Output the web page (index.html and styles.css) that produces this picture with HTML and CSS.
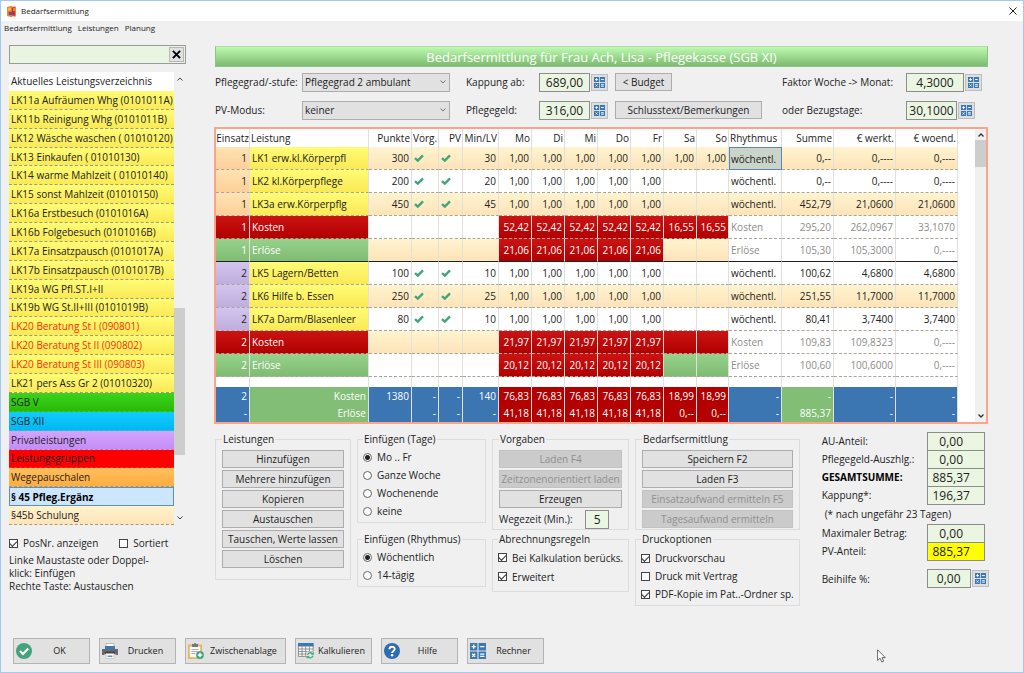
FILE: index.html
```html
<!DOCTYPE html>
<html lang="de">
<head>
<meta charset="utf-8">
<title>Bedarfsermittlung</title>
<link rel="stylesheet" href="styles.css">
</head>
<body>
<svg class="defs" aria-hidden="true">
  <symbol id="tick" viewBox="0 0 10 8"><path d="M1 4.2 3.8 6.6 9 1.4" fill="none" stroke="#3fa67c" stroke-width="2.4"/></symbol>
  <symbol id="calc" viewBox="0 0 16 16">
    <path fill="#3c78b4" d="M0 0h7.4v7.4H0zM8.6 0H16v7.4H8.6zM0 8.6h7.4V16H0zM8.6 8.6H16V16H8.6z"/>
    <path stroke="#fff" stroke-width="1.3" fill="none" d="M1.6 3.7h4.2M3.7 1.6v4.2M10.2 3.7h4.2M2.2 10.8l3 3M5.2 10.8l-3 3M10.2 11.2h4.2M10.2 13.4h4.2"/>
  </symbol>
</svg>
<div class="window">
  <header class="titlebar">
    <svg class="app-icon" viewBox="0 0 9 11"><path fill="#e8702a" d="M0 1 5 0v11l-5-1z"/><path fill="#b5305a" d="M5 1h4v9H5z"/><path fill="#f7b73c" d="M1 2l3-.4v3L1 5z"/><path fill="#f0803c" d="M6 2h2v3H6z"/><path fill="#6a4a9c" d="M2 6h3v3H2z"/><path fill="none" stroke="#f08a30" d="M.5 1.500 8.500.8v9.400l-8-.7z"/></svg>
    <h1>Bedarfsermittlung</h1>
    <button class="close" aria-label="Schließen"><svg viewBox="0 0 8 8"><path d="M.5.5l7 7M7.5.5l-7 7" stroke="#222" fill="none"/></svg></button>
  </header>
  <nav class="menu"><a href="#">Bedarfsermittlung</a><a href="#">Leistungen</a><a href="#">Planung</a></nav>

  <div class="content">
    <aside class="sidebar">
      <div class="search">
        <input type="text" aria-label="Suche">
        <button aria-label="Leeren"><svg viewBox="0 0 10 10"><path d="M1 1l8 8M9 1 1 9" stroke="#000" stroke-width="2.2" fill="none"/></svg></button>
      </div>
      <div class="list-wrap">
        <div class="list">
          <h2>Aktuelles Leistungsverzeichnis</h2>
          <ul>
            <li>LK11a Aufräumen Whg (0101011A)</li>
            <li>LK11b Reinigung Whg (0101011B)</li>
            <li>LK12 Wäsche waschen ( 01010120)</li>
            <li>LK13 Einkaufen ( 01010130)</li>
            <li>LK14 warme Mahlzeit ( 01010140)</li>
            <li>LK15 sonst Mahlzeit (01010150)</li>
            <li>LK16a Erstbesuch (0101016A)</li>
            <li>LK16b Folgebesuch (0101016B)</li>
            <li>LK17a Einsatzpausch (0101017A)</li>
            <li>LK17b Einsatzpausch (0101017B)</li>
            <li>LK19a WG Pfl.ST.I+II</li>
            <li>LK19b WG St.II+III (0101019B)</li>
            <li class="warn">LK20 Beratung St I (090801)</li>
            <li class="warn">LK20 Beratung St II (090802)</li>
            <li class="warn">LK20 Beratung St III (090803)</li>
            <li>LK21 pers Ass Gr 2 (01010320)</li>
            <li class="sgb5">SGB V</li>
            <li class="sgb12">SGB XII</li>
            <li class="privat">Privatleistungen</li>
            <li class="gruppen">Leistungsgruppen</li>
            <li class="wege">Wegepauschalen</li>
            <li class="selected">§ 45 Pfleg.Ergänz</li>
            <li class="cream">§45b Schulung</li>
          </ul>
        </div>
        <div class="scroll">
          <svg viewBox="0 0 6 4"><path d="M.5 3.5 3 1l2.5 2.5" fill="none" stroke="#444"/></svg>
          <div class="side-track"><i></i></div>
          <svg viewBox="0 0 6 4"><path d="M.5.5 3 3 5.500.5" fill="none" stroke="#444"/></svg>
        </div>
      </div>
      <div class="side-checks">
        <label><input type="checkbox" checked>PosNr. anzeigen</label>
        <label><input type="checkbox">Sortiert</label>
      </div>
      <p class="hint">Linke Maustaste oder Doppel-<br>klick: Einfügen<br>Rechte Taste: Austauschen</p>
    </aside>

    <main class="main">
      <h2 class="banner">Bedarfsermittlung für Frau Ach, Lisa - Pflegekasse (SGB XI)</h2>

      <div class="params">
        <label for="grad">Pflegegrad/-stufe:</label>
        <select id="grad"><option>Pflegegrad 2 ambulant</option></select>
        <label for="kapp">Kappung ab:</label>
        <div class="pair"><input id="kapp" class="num w-51" value="689,00"><button class="calc" aria-label="Rechner"><svg><use href="#calc"/></svg></button></div>
        <div><button class="btn budget">&lt; Budget</button></div>
        <label for="faktor">Faktor Woche -&gt; Monat:</label>
        <div class="pair"><input id="faktor" class="num w-58" value="4,3000"><button class="calc" aria-label="Rechner"><svg><use href="#calc"/></svg></button></div>

        <label for="modus">PV-Modus:</label>
        <select id="modus"><option>keiner</option></select>
        <label for="geld">Pflegegeld:</label>
        <div class="pair"><input id="geld" class="num w-51" value="316,00"><button class="calc" aria-label="Rechner"><svg><use href="#calc"/></svg></button></div>
        <div><button class="btn closing">Schlusstext/Bemerkungen</button></div>
        <label for="bezug">oder Bezugstage:</label>
        <div class="pair"><input id="bezug" class="num w-51" value="30,1000"><button class="calc" aria-label="Rechner"><svg><use href="#calc"/></svg></button></div>
      </div>

      <div class="grid">
        <table>
          <colgroup><col class="c34"><col class="c119"><col class="c43"><col class="c27"><col class="c24"><col class="c36"><col class="c33"><col class="c33"><col class="c33"><col class="c33"><col class="c33"><col class="c33"><col class="c32"><col class="c53"><col class="c52"><col class="c62"><col class="c62"></colgroup>
          <thead><tr><th>Einsatz</th><th>Leistung</th><th>Punkte</th><th>Vorg.</th><th>PV</th><th>Min/LV</th><th>Mo</th><th>Di</th><th>Mi</th><th>Do</th><th>Fr</th><th>Sa</th><th>So</th><th>Rhythmus</th><th>Summe</th><th>€ werkt.</th><th>€ woend.</th></tr></thead>
          <tbody>
            <tr class="shade"><td class="e1">1</td><td class="yel">LK1 erw.kl.Körperpfl</td><td>300</td><td><svg><use href="#tick"/></svg></td><td><svg><use href="#tick"/></svg></td><td>30</td><td>1,00</td><td>1,00</td><td>1,00</td><td>1,00</td><td>1,00</td><td>1,00</td><td>1,00</td><td class="focus">wöchentl.</td><td>0,--</td><td>0,----</td><td>0,----</td></tr>
            <tr><td class="e1">1</td><td class="yel">LK2 kl.Körperpflege</td><td>200</td><td><svg><use href="#tick"/></svg></td><td><svg><use href="#tick"/></svg></td><td>20</td><td>1,00</td><td>1,00</td><td>1,00</td><td>1,00</td><td>1,00</td><td></td><td></td><td>wöchentl.</td><td>0,--</td><td>0,----</td><td>0,----</td></tr>
            <tr class="shade"><td class="e1">1</td><td class="yel">LK3a erw.Körperpflg</td><td>450</td><td><svg><use href="#tick"/></svg></td><td><svg><use href="#tick"/></svg></td><td>45</td><td>1,00</td><td>1,00</td><td>1,00</td><td>1,00</td><td>1,00</td><td></td><td></td><td>wöchentl.</td><td>452,79</td><td>21,0600</td><td>21,0600</td></tr>
            <tr class="sum"><td class="red">1</td><td class="red">Kosten</td><td></td><td></td><td></td><td></td><td class="red">52,42</td><td class="red">52,42</td><td class="red">52,42</td><td class="red">52,42</td><td class="red">52,42</td><td class="red">16,55</td><td class="red">16,55</td><td>Kosten</td><td>295,20</td><td>262,0967</td><td>33,1070</td></tr>
            <tr class="sum shade last"><td class="grn">1</td><td class="grn">Erlöse</td><td></td><td></td><td></td><td></td><td class="red">21,06</td><td class="red">21,06</td><td class="red">21,06</td><td class="red">21,06</td><td class="red">21,06</td><td></td><td></td><td>Erlöse</td><td>105,30</td><td>105,3000</td><td>0,----</td></tr>
            <tr><td class="e2">2</td><td class="yel">LK5 Lagern/Betten</td><td>100</td><td><svg><use href="#tick"/></svg></td><td><svg><use href="#tick"/></svg></td><td>10</td><td>1,00</td><td>1,00</td><td>1,00</td><td>1,00</td><td>1,00</td><td></td><td></td><td>wöchentl.</td><td>100,62</td><td>4,6800</td><td>4,6800</td></tr>
            <tr class="shade"><td class="e2">2</td><td class="yel">LK6 Hilfe b. Essen</td><td>250</td><td><svg><use href="#tick"/></svg></td><td><svg><use href="#tick"/></svg></td><td>25</td><td>1,00</td><td>1,00</td><td>1,00</td><td>1,00</td><td>1,00</td><td></td><td></td><td>wöchentl.</td><td>251,55</td><td>11,7000</td><td>11,7000</td></tr>
            <tr><td class="e2">2</td><td class="yel">LK7a Darm/Blasenleer</td><td>80</td><td><svg><use href="#tick"/></svg></td><td><svg><use href="#tick"/></svg></td><td>10</td><td>1,00</td><td>1,00</td><td>1,00</td><td>1,00</td><td>1,00</td><td></td><td></td><td>wöchentl.</td><td>80,41</td><td>3,7400</td><td>3,7400</td></tr>
            <tr class="sum shade"><td class="red">2</td><td class="red">Kosten</td><td></td><td></td><td></td><td></td><td class="red">21,97</td><td class="red">21,97</td><td class="red">21,97</td><td class="red">21,97</td><td class="red">21,97</td><td class="red"></td><td class="red"></td><td>Kosten</td><td>109,83</td><td>109,8323</td><td>0,----</td></tr>
            <tr class="sum"><td class="grn">2</td><td class="grn">Erlöse</td><td></td><td></td><td></td><td></td><td class="red">20,12</td><td class="red">20,12</td><td class="red">20,12</td><td class="red">20,12</td><td class="red">20,12</td><td class="grn"></td><td class="grn"></td><td>Erlöse</td><td>100,60</td><td>100,6000</td><td>0,----</td></tr>
            <tr class="gap"><td></td><td></td><td></td><td></td><td></td><td></td><td></td><td></td><td></td><td></td><td></td><td></td><td></td><td></td><td></td><td></td><td></td></tr>
          </tbody>
          <tfoot><tr><td>2<br>-</td><td class="tg">Kosten<br>Erlöse</td><td>1380<br>&nbsp;</td><td>-<br>-</td><td>-<br>-</td><td>140<br>-</td><td class="tr">76,83<br>41,18</td><td class="tr">76,83<br>41,18</td><td class="tr">76,83<br>41,18</td><td class="tr">76,83<br>41,18</td><td class="tr">76,83<br>41,18</td><td class="tr">18,99<br>0,--</td><td class="tr">18,99<br>0,--</td><td>-<br>-</td><td class="tg">-<br>885,37</td><td>-<br>-</td><td>-<br>-</td></tr></tfoot>
        </table>
        <div class="scroll bars">
          <svg viewBox="0 0 6 4"><path d="M.5 3.500 3 1l2.5 2.5" fill="none" stroke="#333" stroke-width="1.3"/></svg>
          <div class="grid-track"><i></i></div>
          <svg viewBox="0 0 6 4"><path d="M.5.5 3 3 5.500.5" fill="none" stroke="#333" stroke-width="1.3"/></svg>
        </div>
      </div>

      <div class="panels">
        <div class="col col-a">
          <fieldset class="buttons tall"><legend>Leistungen</legend>
            <div class="stack"><button class="btn">Hinzufügen</button><button class="btn">Mehrere hinzufügen</button><button class="btn">Kopieren</button><button class="btn">Austauschen</button><button class="btn">Tauschen, Werte lassen</button><button class="btn">Löschen</button></div>
          </fieldset>
        </div>
        <div class="col col-b">
          <fieldset class="options"><legend>Einfügen (Tage)</legend>
            <label><input type="radio" name="tage" checked>Mo .. Fr</label>
            <label><input type="radio" name="tage">Ganze Woche</label>
            <label><input type="radio" name="tage">Wochenende</label>
            <label><input type="radio" name="tage">keine</label>
          </fieldset>
          <fieldset class="options"><legend>Einfügen (Rhythmus)</legend>
            <label><input type="radio" name="rhy" checked>Wöchentlich</label>
            <label><input type="radio" name="rhy">14-tägig</label>
          </fieldset>
        </div>
        <div class="col col-a">
          <fieldset class="buttons"><legend>Vorgaben</legend>
            <div class="stack"><button class="btn" disabled>Laden F4</button><button class="btn" disabled>Zeitzonenorientiert laden</button><button class="btn">Erzeugen</button>
            <div class="travel"><label for="weg">Wegezeit (Min.):</label><input id="weg" class="num w-24" value="5"></div></div>
          </fieldset>
          <fieldset class="options rules"><legend>Abrechnungsregeln</legend>
            <label><input type="checkbox" checked>Bei Kalkulation berücks.</label>
            <label><input type="checkbox" checked>Erweitert</label>
          </fieldset>
        </div>
        <div class="col col-d">
          <fieldset class="buttons"><legend>Bedarfsermittlung</legend>
            <div class="stack"><button class="btn">Speichern F2</button><button class="btn">Laden F3</button><button class="btn" disabled>Einsatzaufwand ermitteln F5</button><button class="btn" disabled>Tagesaufwand ermitteln</button></div>
          </fieldset>
          <fieldset class="options print"><legend>Druckoptionen</legend>
            <label><input type="checkbox" checked>Druckvorschau</label>
            <label><input type="checkbox">Druck mit Vertrag</label>
            <label><input type="checkbox" checked>PDF-Kopie im Pat..-Ordner sp.</label>
          </fieldset>
        </div>
        <div class="totals">
          <label for="au">AU-Anteil:</label><input id="au" class="num" value="0,00">
          <label for="ausz">Pflegegeld-Auszhlg.:</label><input id="ausz" class="num" value="0,00">
          <label for="ges" class="strong">GESAMTSUMME:</label><input id="ges" class="num" value="885,37">
          <label for="kap2">Kappung*:</label><input id="kap2" class="num" value="196,37">
          <span class="note">(* nach ungefähr 23 Tagen)</span>
          <label for="max">Maximaler Betrag:</label><input id="max" class="num" value="0,00">
          <label for="pv">PV-Anteil:</label><input id="pv" class="num hot" value="885,37">
          <label for="bei" class="aid">Beihilfe %:</label><div class="pair aid"><input id="bei" class="num w-44" value="0,00"><button class="calc" aria-label="Rechner"><svg><use href="#calc"/></svg></button></div>
        </div>
      </div>
    </main>
  </div>

  <footer class="actions">
    <button class="act"><svg viewBox="0 0 16 16"><circle cx="8" cy="8" r="8" fill="#45a37c"/><path d="M4 8l3 3 5.200-5.500" fill="none" stroke="#fff" stroke-width="2.2"/></svg><span>OK</span></button>
    <button class="act"><svg viewBox="0 0 16 16"><path fill="#fff" stroke="#999" stroke-width=".6" d="M4 .5h8V4H4z"/><path fill="#3c78b4" d="M3 3h10v3H3z"/><path fill="#666a70" d="M0 6h16v6h-2.500V9.500h-11V12H0z"/><path fill="#444" d="M2.500 8.500h11V11h-11z"/><path fill="#fff" stroke="#aaa" stroke-width=".5" d="M4 10.500h8v5H4z"/><path fill="#5a93cc" d="M5.500 12.500h5v1.500h-5z"/></svg><span>Drucken</span></button>
    <button class="act wide"><svg viewBox="0 0 16 16"><path fill="#e8b55f" d="M0 1.500h14V16H0z"/><path fill="#fff" d="M1.800 3.500h10.400v10.700H1.800z"/><path fill="#77797c" d="M4 1h1.800a1.300 1.300 0 0 1 2.500 0H10v3H4z"/><path stroke="#999" stroke-width=".8" d="M3.500 6.500h7M3.500 8.500h6M3.500 10.500h4"/><circle cx="12" cy="12" r="3.900" fill="#45a37c"/><path d="M12 9.800v4.400M9.800 12h4.400" stroke="#fff" stroke-width="1.400"/></svg><span>Zwischenablage</span></button>
    <button class="act"><svg viewBox="0 0 16 16"><path fill="#fff" stroke="#777" stroke-width=".8" d="M.4.4h14.700v13H.4z"/><path fill="#3c78b4" d="M0 0h15.500v3.500H0z"/><path stroke="#777" stroke-width=".8" fill="none" d="M0 6h15M0 8.500h15M0 11h15M4 3.500v10M7.700 3.500v10M11.400 3.500v10"/><path fill="#e0e0e0" d="M8.500 8.500H16V16H8.500z"/><path d="M9.500 11.800a2.900 2.900 0 0 1 5-1M15 12.800a2.900 2.900 0 0 1-5 1" fill="none" stroke="#3fae76" stroke-width="1.300"/><path fill="#3fae76" d="M16 8.800v3h-3zM8.600 16v-3h3z"/></svg><span>Kalkulieren</span></button>
    <button class="act"><svg viewBox="0 0 16 16"><circle cx="8" cy="8" r="8" fill="#2f6cae"/><path d="M5.400 6.200C5.400 2.900 10.700 3 10.700 6c0 1.900-2.600 1.900-2.600 4" fill="none" stroke="#fff" stroke-width="1.900"/><circle cx="8.100" cy="12.300" r="1.200" fill="#fff"/></svg><span>Hilfe</span></button>
    <button class="act"><svg><use href="#calc"/></svg><span>Rechner</span></button>
  </footer>
  <svg class="cursor" viewBox="0 0 9 14" aria-hidden="true"><path d="M.6.800v10.700l2.500-2.300 1.700 3.800 1.900-.8L5 8.600h3.300z" fill="#fff" stroke="#444" stroke-width=".8"/></svg>
</div>
</body>
</html>
```

FILE: styles.css
```css
* { box-sizing: border-box; }
body {
  margin: 0;
  font: 10px/14px "Open Sans", "Noto Sans", sans-serif;
  color: #222;
}
h1, h2, p, ul { margin: 0; padding: 0; font-size: inherit; font-weight: normal; }
button, input, select { font: inherit; color: inherit; margin: 0; }
.defs { display: none; }

.window {
  position: relative;
  display: flex;
  flex-direction: column;
  min-height: 100vh;
  background: #f0f0f0;
  border: 1px solid #9fcbf5;
}
.titlebar {
  display: flex;
  align-items: center;
  gap: 5px;
  height: 20px;
  padding: 0 6px;
  background: #fff;
}
.titlebar h1 { flex: 1; font-size: 8px; }
.app-icon { width: 9px; height: 11px; }
.close { display: flex; padding: 0; border: 0; background: none; }
.close svg { width: 8px; height: 8px; }
.menu { display: flex; gap: 6px; padding: 0 3px; font-size: 8px; }
.menu a { color: #222; text-decoration: none; }

.content { display: flex; flex: 1; gap: 28px; padding: 10px 35px 0 8px; }

/* Sidebar */
.sidebar { flex: 0 0 177px; min-width: 0; }
.search {
  display: flex;
  height: 19px;
  padding: 1px;
  border: 1px solid #9a9a9a;
  background: #eaf5e1;
}
.search input { flex: 1; min-width: 0; border: 0; background: none; }
.search button {
  display: flex;
  align-items: center;
  justify-content: center;
  width: 15px;
  padding: 0;
  border: 1px solid #b8b8b8;
  background: #e1e1e1;
}
.search svg { width: 9px; height: 9px; }
.list-wrap { display: flex; margin-top: 8px; }
.list { flex: 1; min-width: 0; }
.list h2 { height: 19px; padding: 0 2px; line-height: 19px; background: #fff; }
.list ul { display: grid; grid-template-columns: minmax(0, 1fr); grid-auto-rows: 1fr; height: 434px; list-style: none; }
.list li {
  display: flex;
  align-items: center;
  min-height: 0;
  padding: 0 0 0 2px;
  white-space: nowrap;
  border-bottom: 1px dashed #9c9b7c;
  background: linear-gradient(#fffc75, #fae956);
}
.list li.warn { color: #f8310c; }
.list li.sgb5 { background: linear-gradient(#3bd31c, #27bb08); border-color: #2fb81a; }
.list li.sgb12 { background: linear-gradient(#12ccff, #00b8f0); border-color: #44a7d4; }
.list li.privat { background: linear-gradient(#d4a5ff, #c48df5); border-color: #b27fc0; }
.list li.gruppen { background: #fe0000; border-color: #d33; }
.list li.wege { background: linear-gradient(#ffbf5c, #ffad40); }
.list li.selected { background: #cce6ff; border: 1px solid #5d8fc4; padding: 0 1px; font-weight: bold; color: #000; }
.list li.cream { background: linear-gradient(#fff3cd, #fde4b8); }
.scroll { display: flex; flex-direction: column; align-items: center; flex: 0 0 12px; padding: 5px 0; }
.scroll svg { width: 6px; height: 4px; flex: none; }
.scroll i { display: block; background: #cdcdcd; }
.side-track { flex: 1; align-self: stretch; padding: 227px 1px 0 0; }
.side-track i { height: 147px; }
.side-checks { display: flex; gap: 21px; margin-top: 11px; }
label { white-space: nowrap; }
.side-checks label, .options label { display: flex; align-items: center; gap: 5px; }
.hint { margin-top: 4px; line-height: 13px; }

input[type="checkbox"], input[type="radio"] {
  appearance: none;
  flex: none;
  width: 9px;
  height: 9px;
  border: 1px solid #444;
  background: #fff;
}
input[type="radio"] { border-color: #666; border-radius: 50%; }
input[type="radio"]:checked { background: radial-gradient(circle, #222 2px, #fff 3px); }
input[type="checkbox"]:checked::before {
  content: "";
  display: block;
  width: 6px;
  height: 3px;
  margin-top: 1px;
  border: solid #333;
  border-width: 0 0 1px 1px;
  transform: rotate(-45deg);
}

/* Main */
.main { flex: 1; min-width: 0; }
.banner {
  margin: 1px 0 0 1px;
  height: 21px;
  font-size: 13px;
  line-height: 21px;
  text-align: center;
  color: #fff;
  border: 1px solid #8cc48a;
  border-top-color: #b5d8ae;
  background: linear-gradient(#bdfbb0, #7dba70);
}
.params {
  display: grid;
  grid-template-columns: 87px 164px 73px 76px 167px 124px auto;
  grid-auto-rows: 18px;
  row-gap: 10px;
  align-items: center;
  margin: 6px 0 8px 1px;
}
select {
  appearance: none;
  width: 148px;
  height: 19px;
  padding: 0 2px;
  border: 1px solid #adadad;
  border-radius: 0;
  background: #e1e1e1 url("data:image/svg+xml,%3Csvg xmlns='http://www.w3.org/2000/svg' viewBox='0 0 6 4'%3E%3Cpath d='M.5.5 3 3 5.5.5' fill='none' stroke='%23555' stroke-width='.8'/%3E%3C/svg%3E") no-repeat right 3px center / 6px 4px;
}
.pair { display: flex; align-items: center; gap: 1px; }
.num {
  width: 58px;
  height: 19px;
  padding: 0 9px 0 0;
  border: 1px solid #8d8d8d;
  background: #ebf6e2;
  font-size: 12px;
  line-height: 17px;
  text-align: center;
}
.w-51 { width: 51px; padding: 0 2px; }
.w-58 { width: 58px; padding: 0 5px; }
.w-44 { width: 44px; padding: 0 5px; }
.w-24 { width: 24px; padding: 0 3px; }
.calc {
  display: flex;
  align-items: center;
  justify-content: center;
  width: 17px;
  height: 17px;
  padding: 0;
  border: 1px solid #bdbdbd;
  background: #dedede;
}
.calc svg { width: 11px; height: 11px; }
.btn {
  height: 18px;
  padding: 0;
  line-height: 16px;
  white-space: nowrap;
  border: 1px solid #adadad;
  background: #e1e1e1;
}
.btn:disabled { color: #8f8f8f; border-color: #c2c2c2; background: #cbcbcb; }
.budget { width: 57px; }
.closing { width: 147px; }

/* Service grid */
.grid {
  display: flex;
  justify-content: space-between;
  border: 2px solid #fca389;
  background: #fff;
}
table { width: 742px; table-layout: fixed; border-collapse: separate; border-spacing: 0; }
.c24 { width: 24px; } .c27 { width: 27px; } .c32 { width: 32px; } .c33 { width: 33px; }
.c34 { width: 34px; } .c36 { width: 36px; } .c43 { width: 43px; } .c52 { width: 52px; }
.c53 { width: 53px; } .c62 { width: 62px; } .c119 { width: 119px; }
th, td {
  padding: 0 2px;
  text-align: right;
  white-space: nowrap;
  font-weight: normal;
  border-right: 1px solid #e2e0dc;
}
th { height: 18px; padding: 0 1px; }
th:first-child { padding: 0; }
tbody td { height: 23px; border-bottom: 1px dashed #a9a59c; }
th:nth-child(2), td:nth-child(2), th:nth-child(14), tbody td:nth-child(14) { text-align: left; }
tbody td:nth-child(4), tbody td:nth-child(5) { text-align: left; }
td svg { display: block; width: 10px; height: 8px; }
tr.shade td { background: linear-gradient(#fff4d0, #fde3b8); }
tr.sum td:nth-child(n+14) { color: #8c8c8c; background: #fff; }
tr.last td { border-bottom: 1px solid #222; }
tr td.e1 { background: linear-gradient(#ffe3b3, #fdcf98); }
tr td.e2 { background: linear-gradient(#d3c4ee, #bfaedc); }
tr td.yel { background: linear-gradient(#fffc75, #fae956); }
tr td.red { color: #fff; background: linear-gradient(#cc1313, #b10000); }
tr td.grn { color: #fff; background: linear-gradient(#96d28b, #80bb73); }
tr td.focus { background: #cbd4c8; border: 1px solid #5d86b8; padding: 0 1px; }
tr.gap td { height: 10px; border-bottom: 0; }
tfoot td { height: 35px; line-height: 17px; color: #fff; background: #3c76b2; }
tfoot td:nth-child(2) { text-align: right; }
tfoot td.tg { background: #82be76; }
tfoot td.tr { background: #b30000; }
.bars { flex-basis: 11px; background: #f0f0f0; padding: 4px 0; }
.grid-track { flex: 1; align-self: stretch; padding-top: 3px; }
.grid-track i { height: 27px; }

/* Lower panels */
.panels { display: flex; gap: 6px; margin: 8px 0 0 1px; align-items: flex-start; }
.col { display: flex; flex-direction: column; gap: 2px; }
.col-a { flex: 0 0 136px; }
.col-b { flex: 0 0 129px; gap: 9px; }
.col-d { flex: 0 0 160px; }
fieldset { min-width: 0; margin: 0; border: 1px solid #dcdcdc; }
legend { padding: 0 1px; }
.buttons { padding: 4px 6px 1px; }
.stack { display: grid; grid-auto-rows: 18px; row-gap: 2px; }
.tall { padding-bottom: 11px; }
.travel { display: flex; justify-content: space-between; align-items: center; padding-right: 13px; }
.options { padding: 2px 5px; }
.options label { height: 18px; }
.rules label { height: 19px; }
.rules { padding-bottom: 5px; }
.print { padding-top: 3px; }
.totals {
  display: grid;
  grid-template-columns: 105px 63px;
  grid-template-rows: repeat(4, 18px) 20px 18px 18px;
  align-items: center;
  margin-left: 16px;
}
.totals .note { grid-column: 1 / -1; padding-left: 3px; }
.totals .strong { font-weight: bold; color: #000; }
.totals .hot { background: #ff0; }
.totals .aid { margin-top: 9px; }

/* Actions */
.actions { display: flex; gap: 9px; padding: 0 12px 8px; }
.act {
  display: flex;
  align-items: center;
  width: 77px;
  height: 26px;
  padding: 0 2px;
  font-size: 9px;
  border: 1px solid #b4b4b4;
  background: #e1e1e1;
}
.act svg { width: 16px; height: 16px; flex: none; }
.act span { flex: 1; }
.wide { width: 101px; }
.cursor { position: absolute; left: 876px; top: 648px; width: 9px; height: 14px; }
```
